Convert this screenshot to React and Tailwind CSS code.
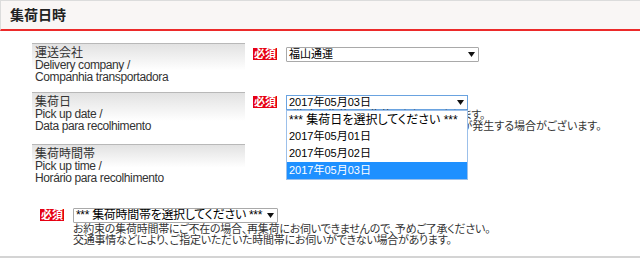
import React from 'react';

const Badge = ({ className = '' }) => (
  <div
    className={`w-[24px] h-[12px] bg-[#e60012] text-white text-[11px] font-bold leading-[12px] flex items-center justify-center shrink-0 ${className}`}
  >
    必須
  </div>
);

const Arrow = () => (
  <svg width="7" height="5" viewBox="0 0 7 5" className="shrink-0">
    <path d="M0 0 H7 L3.5 5 Z" fill="#111" />
  </svg>
);

const Label = ({ ja, en, pt }) => (
  <div className="w-[213px] h-full border-t border-[#b8b8b8] bg-linear-to-b from-[#e2e2e2] via-white via-[55%] to-white pl-[3px] pt-[3px] leading-[12px] text-[#333] shrink-0">
    <div className="text-[12px]">{ja}</div>
    <div className="text-[12px] tracking-[-0.4px]">{en}</div>
    <div className="text-[12px] tracking-[-0.4px]">{pt}</div>
  </div>
);

const Select = ({ value, w, focus, size = 'text-[11px]' }) => (
  <div
    className={`${w} h-[15px] border ${focus ? 'border-[#6aa3e0]' : 'border-[#a9a9a9] rounded-[1px]'} bg-white flex items-center justify-between pl-[2px] pr-[3px] ${size} leading-[13px] text-black overflow-hidden`}
  >
    <span className="whitespace-nowrap">{value}</span>
    <Arrow />
  </div>
);

const options = ['*** 集荷日を選択してください ***', '2017年05月01日', '2017年05月02日', '2017年05月03日'];

export default function App() {
  return (
    <div className="w-[640px] h-[260px] bg-white overflow-hidden text-[12px] text-[#333] font-['Liberation_Sans','Noto_Sans_CJK_JP',sans-serif] [font-feature-settings:'palt']">
      <div className="h-[258px] border-b-2 border-[#d4d4d4]">
        <div className="h-[31px] border-t border-l border-[#dcdcdc] border-b-2 border-b-[#ec2a2a] bg-[#f9f6f5] pl-[9px] flex items-center">
          <span className="text-[14px] font-bold text-[#222]">集荷日時</span>
        </div>

        <div className="pl-[32px] pt-[12px]">
          {/* 運送会社 */}
          <div className="flex h-[49px]">
            <Label ja="運送会社" en="Delivery company /" pt="Companhia transportadora" />
            <Badge className="ml-[8px] mt-[5px]" />
            <div className="ml-[9px] mt-[4px]">
              <Select value="福山通運" w="w-[193px]" />
            </div>
          </div>

          {/* 集荷日 */}
          <div className="flex h-[52px]">
            <Label ja="集荷日" en="Pick up date /" pt="Data para recolhimento" />
            <Badge className="ml-[8px] mt-[4px]" />
            <div className="ml-[9px] mt-[3px] relative">
              <Select value="2017年05月03日" w="w-[182px]" focus />
              <div className="text-[11px] leading-[11px] text-[#333] whitespace-nowrap">
                <div className="tracking-[-0.3px]">ご指定の集荷日に集荷にお伺いいたします。</div>
                <div>天候や交通事情などにより、集荷遅延が発生する場合がございます。</div>
              </div>
              <div className="absolute left-0 top-[15px] w-[182px] border border-[#9cc0ea] bg-white text-black text-[11px] z-10">
                {options.map((o, i) => (
                  <div
                    key={o}
                    className={`h-[17px] pl-[2px] flex items-center whitespace-nowrap ${
                      i === 3 ? 'bg-[#1e90ff] text-white' : ''
                    } ${i === 0 ? 'text-[12px]' : ''}`}
                  >
                    {o}
                  </div>
                ))}
              </div>
            </div>
          </div>

          {/* 集荷時間帯 */}
          <div className="flex h-[42px]">
            <Label ja="集荷時間帯" en="Pick up time /" pt="Horário para recolhimento" />
          </div>
        </div>

        <div className="flex pl-[40px] pt-[22px]">
          <Badge className="mt-[1px]" />
          <div className="ml-[9px]">
            <Select value="*** 集荷時間帯を選択してください ***" w="w-[205px]" size="text-[12px] tracking-[-0.3px]" />
            <div className="text-[11px] leading-[11px] tracking-[-0.25px] text-[#333] whitespace-nowrap mt-[1px]">
              <div>お約束の集荷時間帯にご不在の場合、再集荷にお伺いできませんので、予めご了承ください。</div>
              <div>交通事情などにより、ご指定いただいた時間帯にお伺いができない場合があります。</div>
            </div>
          </div>
        </div>
      </div>
    </div>
  );
}
